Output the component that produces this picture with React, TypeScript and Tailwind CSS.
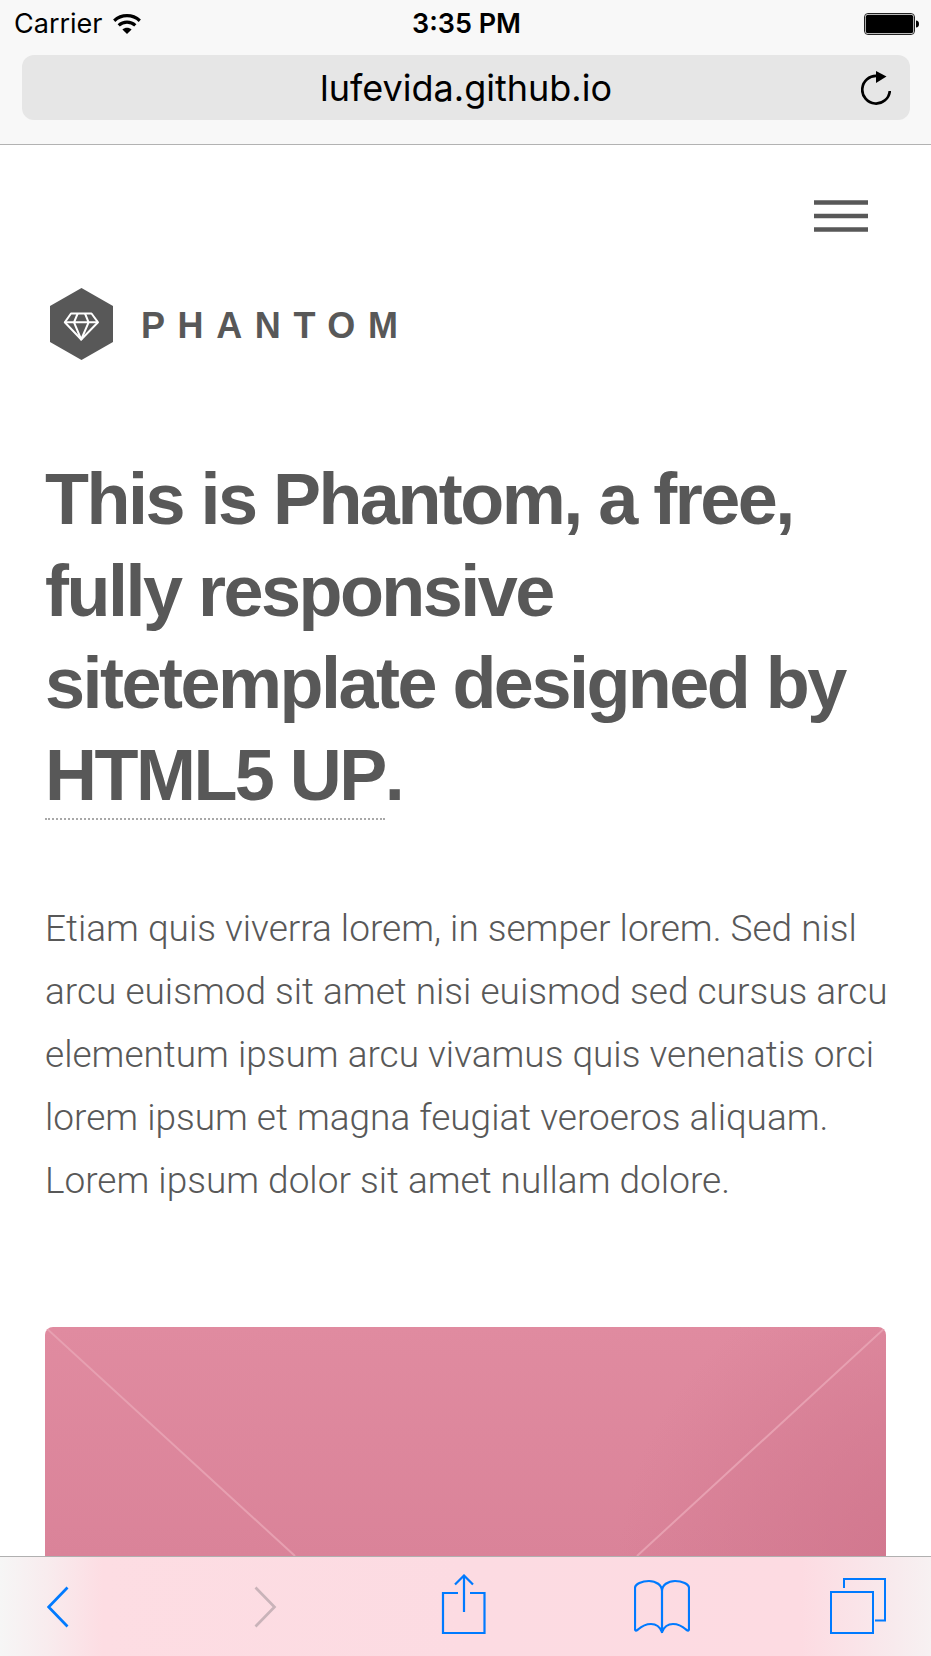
import React from "react";

function WifiIcon() {
  return (
    <svg className="h-5 w-7" viewBox="0 0 28 20" fill="none" stroke="#000" strokeWidth="3.200" aria-hidden="true">
      <path d="M1.200 6.700C8.500 0 19.500 0 26.800 6.700" />
      <path d="M5.700 11.400C10.400 7.100 17.600 7.100 22.300 11.400" />
      <path d="M9.400 15.600C12 13 16 13 18.600 15.600L14 20Z" fill="#000" stroke="none" />
    </svg>
  );
}

function BatteryIcon() {
  return (
    <svg className="h-[22px] w-[55px]" viewBox="0 0 55 22" aria-label="Battery full">
      <rect x="0.500" y="0.500" width="50" height="21" rx="3.500" fill="none" stroke="#222" />
      <rect x="1.700" y="1.700" width="47.600" height="18.600" rx="2.500" fill="#000" />
      <path d="M52 7.500C54 7.500 55 9 55 11S54 14.500 52 14.500Z" fill="#000" />
    </svg>
  );
}

function ReloadIcon() {
  return (
    <svg className="h-[34px] w-[30px]" viewBox="0 0 30 34" fill="none" aria-hidden="true">
      <path d="M16 5A13.800 13.800 0 1 0 28.800 20" stroke="#000" strokeWidth="2.700" />
      <path d="M15 0L25.500 5.600L15 12Z" fill="#000" />
    </svg>
  );
}

function LogoIcon() {
  return (
    <svg className="h-[72px] w-[63px]" viewBox="0 0 63 72" fill="none" aria-hidden="true">
      <path d="M31.500 0L63 18V54L31.500 72L0 54V18Z" fill="#585858" />
      <g stroke="#fff" strokeWidth="2" strokeLinejoin="round">
        <path d="M21 25.500H41.500L48 34.300L31.200 51.500L14.800 34.300Z" />
        <path d="M14.800 34.300H48M27.700 25.500L24 34.300L31.200 51.500L38.600 34.300L35 25.500" />
      </g>
    </svg>
  );
}

const toolbarIcon = "block h-[60px] w-14";

function Toolbar() {
  return (
    <nav
      aria-label="Browser"
      className="flex h-[100px] shrink-0 items-start justify-between border-t border-[#b0b0b0] bg-[linear-gradient(90deg,#f6f6f6_0%,#f8ecee_5%,#fddde3_11%,#fcdbe2_50%,#fddbe2_86%,#f8eaed_96%,#f7f1f2_100%)] pt-[17px] pr-[45px] pl-[47px]"
    >
      <button type="button" aria-label="Back">
        <svg className={toolbarIcon} viewBox="0 0 56 60" fill="none" stroke="#007aff" strokeWidth="2.700">
          <path d="M20.500 13.500L1.700 33L20.500 52.500" />
        </svg>
      </button>
      <button type="button" aria-label="Forward" disabled>
        <svg className={toolbarIcon} viewBox="0 0 56 60" fill="none" stroke="#c9b3b9" strokeWidth="2.700">
          <path d="M12.500 13.500L31.500 33L12.500 52.500" />
        </svg>
      </button>
      <button type="button" aria-label="Share">
        <svg className={toolbarIcon} viewBox="0 0 56 60" fill="none" stroke="#007aff" strokeWidth="2.200">
          <path d="M19 19H4V59H45.500V19H31M25 38V1.500M16 10.500L25 1.500L34 10.500" />
        </svg>
      </button>
      <button type="button" aria-label="Bookmarks">
        <svg className={toolbarIcon} viewBox="0 0 56 60" fill="none" stroke="#007aff" strokeWidth="2.200" strokeLinejoin="round">
          <path d="M28 59V17C28 11 22 7 15 7C8 7 1 10 1 14V55C1 57 2 57 4 55.500C8 52 12 50 17 50C23 50 26 53 28 58C30 53 33 50 39 50C44 50 48 52 52 55.500C54 57 55 57 55 55V14C55 10 48 7 41 7C34 7 28 11 28 17" />
        </svg>
      </button>
      <button type="button" aria-label="Tabs">
        <svg className={toolbarIcon} viewBox="0 0 56 60" fill="none" stroke="#007aff" strokeWidth="2">
          <path d="M1 18H43V59H1Z" />
          <path d="M14 14V5H55V46.500H45" />
        </svg>
      </button>
    </nav>
  );
}

export default function App() {
  return (
    <div className="flex min-h-screen flex-col bg-white font-['Liberation_Sans',Arial,sans-serif] text-[#585858]">
      <header className="border-b border-[#b2b2b2] bg-[#f8f8f8] pb-6 font-[Inter,sans-serif] text-black">
        <div className="grid h-[55px] grid-cols-3 items-center pr-3 pb-[7px] pl-3.5 text-[27px] leading-8">
          <div className="flex items-center gap-2.5">
            <span>Carrier</span>
            <WifiIcon />
          </div>
          <time className="text-center font-semibold">3:35 PM</time>
          <div className="flex justify-end">
            <BatteryIcon />
          </div>
        </div>
        <div className="mr-[21px] ml-[22px] grid h-[65px] grid-cols-[1fr_auto_1fr] items-center rounded-xl bg-[#e6e6e6] px-[19px]">
          <span className="col-start-2 text-4xl leading-[48px]">lufevida.github.io</span>
          <button type="button" aria-label="Reload" className="justify-self-end">
            <ReloadIcon />
          </button>
        </div>
      </header>

      <main className="flex grow flex-col px-[45px] pt-[55px]">
        <button type="button" aria-label="Menu" className="mr-[18px] self-end">
          <svg className="h-8 w-[54px]" viewBox="0 0 54 32" stroke="#585858" strokeWidth="4.400" aria-hidden="true">
            <path d="M0 2.500H54M0 16H54M0 29.500H54" />
          </svg>
        </button>

        <a href="#" className="mt-14 ml-[5px] flex items-center gap-7 self-start">
          <LogoIcon />
          <span className="pt-1 text-4xl font-bold tracking-[0.35em]">PHANTOM</span>
        </a>

        <h1 className="mt-[93px] text-[72px] leading-[92px] font-bold tracking-[-0.035em]">
          This is Phantom, a free, fully responsive sitetemplate designed by{" "}
          <a href="#" className="border-b-2 border-dotted border-[#a8a8a8] pb-[3px] [font-kerning:none]">
            HTML5 UP
          </a>
          .
        </h1>

        <p className="-mr-3 mt-[76px] font-[Roboto,sans-serif] text-[37px] leading-[63px] font-light">
          Etiam quis viverra lorem, in semper lorem. Sed nisl arcu euismod sit amet nisi euismod sed cursus arcu
          elementum ipsum arcu vivamus quis venenatis orci lorem ipsum et magna feugiat veroeros aliquam. Lorem ipsum
          dolor sit amet nullam dolore.
        </p>

        <a
          href="#"
          aria-label="Featured tile"
          className="mt-[115px] block grow overflow-hidden rounded-t-lg bg-[radial-gradient(38%_140%_at_106%_110%,#d0768d_0%,transparent_100%),linear-gradient(180deg,#e08ba0_0%,#da8399_100%)]"
        >
          <svg className="h-[229px] w-full" viewBox="0 0 841 229" preserveAspectRatio="none" stroke="#e7a0b1" strokeWidth="2" aria-hidden="true">
            <path d="M0 0L250 229M841 0L592 229" />
          </svg>
        </a>
      </main>

      <Toolbar />
    </div>
  );
}
